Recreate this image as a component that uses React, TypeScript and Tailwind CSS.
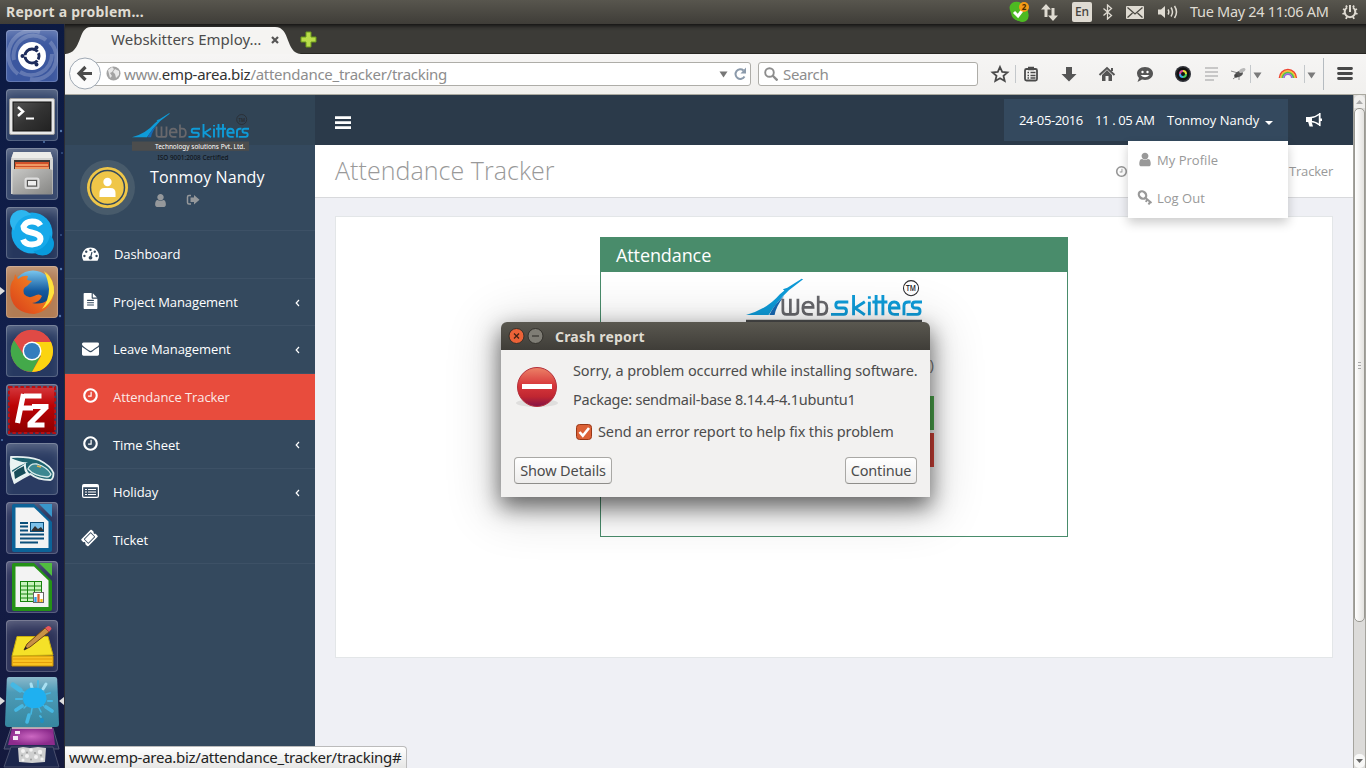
import React from "react";
import { FaTicketAlt } from "react-icons/fa";

const UI = "font-['Noto_Sans',sans-serif]";

const FA = {
  user: "M1536 1399q0 109-62.5 187t-150.5 78h-854q-88 0-150.5-78t-62.5-187q0-85 8.5-160.5t31.5-152 58.5-131 94-89 134.5-34.5q131 128 313 128t313-128q76 0 134.5 34.5t94 89 58.5 131 31.5 152 8.5 160.5zm-256-887q0 159-112.5 271.5t-271.5 112.5-271.5-112.5-112.5-271.5 112.5-271.5 271.5-112.5 271.5 112.5 112.5 271.5z",
  clock: "M1024 544v448q0 14-9 23t-23 9h-320q-14 0-23-9t-9-23v-64q0-14 9-23t23-9h224v-352q0-14 9-23t23-9h64q14 0 23 9t9 23zm416 352q0-148-73-273t-198-198-273-73-273 73-198 198-73 273 73 273 198 198 273 73 273-73 198-198 73-273zm224 0q0 209-103 385.5t-279.5 279.5-385.5 103-385.5-103-279.5-279.5-103-385.5 103-385.5 279.5-279.5 385.5-103 385.5 103 279.5 279.5 103 385.5z",
  envelope: "M1792 710v794q0 66-47 113t-113 47h-1472q-66 0-113-47t-47-113v-794q44 49 101 87 362 246 497 345 57 42 92.5 65.5t94.5 48 110 24.5h2q51 0 110-24.5t94.5-48 92.5-65.5q170-123 498-345 57-39 100-87zm0-294q0 79-49 151t-122 123q-376 261-468 325-10 7-42.5 31t-54 38.5-52 32.5-57.5 27-50 9h-2q-23 0-50-9t-57.5-27-52-32.5-54-38.5-42.5-31q-91-64-262-182.5t-205-142.5q-62-42-117-115.5t-55-136.5q0-78 41.5-130t118.5-52h1472q65 0 112.5 47t47.5 113z",
  dash: "M384 1152q0-53-37.5-90.5t-90.5-37.5-90.5 37.5-37.5 90.5 37.5 90.5 90.5 37.5 90.5-37.5 37.5-90.5zm192-448q0-53-37.5-90.5t-90.5-37.5-90.5 37.5-37.5 90.5 37.5 90.5 90.5 37.5 90.5-37.5 37.5-90.5zm428 481l101-382q6-26-7.5-48.5t-38.5-29.5-48 6.5-30 39.5l-101 382q-60 5-107 43.5t-63 98.5q-20 77 20 146t117 89 146-20 89-117q16-60-6-117t-72-91zm660-33q0-53-37.5-90.5t-90.5-37.5-90.5 37.5-37.5 90.5 37.5 90.5 90.5 37.5 90.5-37.5 37.5-90.5zm-640-640q0-53-37.5-90.5t-90.5-37.5-90.5 37.5-37.5 90.5 37.5 90.5 90.5 37.5 90.5-37.5 37.5-90.5zm448 192q0-53-37.5-90.5t-90.5-37.5-90.5 37.5-37.5 90.5 37.5 90.5 90.5 37.5 90.5-37.5 37.5-90.5zm320 448q0 261-141 483-19 29-54 29h-1402q-35 0-54-29-141-221-141-483 0-182 71-348t191-286 286-191 348-71 348 71 286 191 191 286 71 348z",
  file: "M1596 476q14 14 28 36h-472v-472q22 14 36 28zm-476 164h544v1056q0 40-28 68t-68 28h-1344q-40 0-68-28t-28-68v-1600q0-40 28-68t68-28h800v544q0 40 28 68t68 28zm160 736v-64q0-14-9-23t-23-9h-704q-14 0-23 9t-9 23v64q0 14 9 23t23 9h704q14 0 23-9t9-23zm0-256v-64q0-14-9-23t-23-9h-704q-14 0-23 9t-9 23v64q0 14 9 23t23 9h704q14 0 23-9t9-23zm0-256v-64q0-14-9-23t-23-9h-704q-14 0-23 9t-9 23v64q0 14 9 23t23 9h704q14 0 23-9t9-23z",
};

function Fa({ d, className }: { d: string; className: string }) {
  return (
    <svg viewBox="0 0 1792 1792" className={className} fill="currentColor">
      <path d={d} />
    </svg>
  );
}

function ListIcon() {
  return (
    <svg width="17" height="14" viewBox="0 0 17 14" fill="none" stroke="#fff">
      <rect x=".6" y=".6" width="15.8" height="12.8" rx="1.4" strokeWidth="1.2" />
      <path d="M1 2h15" strokeWidth="2.4" />
      <path d="M3 5.500h2M6 5.500h8M3 8h2M6 8h8M3 10.500h2M6 10.500h8" strokeWidth="1.2" />
    </svg>
  );
}

function SkitterLogo({ className, tag, cert }: { className: string; tag: string; cert: string }) {
  return (
    <svg viewBox="0 0 117 50" className={className}>
      <path d="M0 24.300Q14 20.500 22.500 10.500L25.500 8 24.500 7.300 27.500 6.300 37 .2 38 .6 28.500 7.800Q20.500 15.500 15 24.300Z" fill="#0e9bd8" />
      <path d="M15.500 24.300Q19 17 25.500 11.500 20 18.500 19 24.300Z" fill="#1769b4" />
      <g fill="none" stroke="#68686c" strokeWidth="1.800" transform="translate(0 -.5)">
        <path d="M24.500 14v8q0 2.400 2.400 2.400h5.600q2 0 2-2V14M29.500 14v10" />
        <path d="M38 19.800h6.600q0-3.600-3.200-3.600-3.600 0-3.600 4.100t3.600 4.100h3" />
        <path d="M48 12v12.400h2.400q3.400 0 3.400-4.100T50.400 16.200H48" />
      </g>
      <g fill="none" stroke="#0e9bd8" strokeWidth="1.900" transform="translate(0 -.5)">
        <path d="M68 16.200h-6.500q-1.800 0-1.800 2t1.800 2h3.500q1.800 0 1.800 2.100t-1.800 2.100h-8.500" />
        <path d="M71.500 11.500v13.500M79 16l-6.500 4.200 6.500 4.600M82 16v9M82 12.400v1.600M86.500 11.500v13.500M91 11.500v13.500M84 16.200h10" />
        <path d="M95.500 20.200h6.200q0-4-3.200-4t-3.200 4.100 3.400 4.100h3M105 25v-6.200q0-2.600 3-2.600h1.500" />
        <path d="M117 16.200h-4.500q-2 0-2 2t2 2h1.200q2 0 2 2.100t-2 2.100h-7" />
      </g>
      <circle cx="109.700" cy="6.500" r="5" fill="none" stroke="#28282c" strokeWidth=".7" />
      <text x="106.400" y="8.700" textLength="6.600" lengthAdjust="spacingAndGlyphs" fontSize="6" fontWeight="600" fill="#28282c" fontFamily="Noto Sans">TM</text>
      <rect x="0" y={tag ? 28.5 : 27.5} width="117" height="9.300" fill="#4c4d4d" />
      {tag && <text x="23" y="35.700" textLength="90" lengthAdjust="spacingAndGlyphs" fontSize="7" fill="#fff" fontFamily="Noto Sans">{tag}</text>}
      {cert && <text x="25.500" y="46.500" textLength="71" lengthAdjust="spacingAndGlyphs" fontSize="6.500" fontWeight="500" fill="#11161c" fontFamily="Noto Sans">{cert}</text>}
    </svg>
  );
}

/* ---------- launcher artwork, each drawn on a 52 by 52 tile ---------- */

function Dash() {
  return (
    <>
      <path d="M12 44A24 24 0 0 1 34 2M8 30A20 20 0 0 1 40 10M44 12A22 22 0 0 1 24 49M46 24A21 21 0 0 1 14 42" stroke="#fff" strokeOpacity=".2" strokeWidth="4" fill="none" />
      <circle cx="26" cy="26" r="14" fill="#fff" />
      <circle cx="26" cy="26" r="7" fill="none" stroke="#1d2c5c" strokeWidth="3" />
      <path d="M26 26L36 20M26 26L36 33M26 26H14" stroke="#fff" strokeWidth="1.500" />
      <circle cx="26" cy="26" r="5.300" fill="#fff" />
      <circle cx="16.500" cy="26" r="2" fill="#1d2c5c" />
      <circle cx="30.500" cy="17.500" r="2" fill="#1d2c5c" />
      <circle cx="30.500" cy="34.500" r="2" fill="#1d2c5c" />
    </>
  );
}
function Terminal() {
  return (
    <>
      <rect x="3.500" y="9.500" width="45" height="36" rx="1.500" fill="#e8e8e8" stroke="#9c9c9c" />
      <rect x="7" y="13" width="38" height="29" fill="url(#term)" stroke="#111" />
      <path d="M12 18l5 4.500-5 4.500" stroke="#fff" strokeWidth="2.500" fill="none" />
      <path d="M20 29.500h8" stroke="#fff" strokeWidth="2.200" />
    </>
  );
}
function Files() {
  return (
    <>
      <path d="M7.500 4h37l2.500 7v35H5V11z" fill="#d5d5d3" />
      <path d="M7.500 4h37l2 6H5.500z" fill="#ecece9" />
      <rect x="8" y="12" width="36" height="12" fill="#3f3936" />
      <path d="M9 14h34v8H9z" fill="#d2512a" />
      <path d="M10 17h32M9 20h34" stroke="#f7b178" strokeWidth="1.600" />
      <path d="M6.500 22l2-1h35l3 1v24.500h-40z" fill="url(#steel)" />
      <rect x="19.500" y="30.500" width="13" height="9.500" rx="1.500" fill="none" stroke="#dedede" strokeWidth="2" />
      <rect x="21.500" y="32.500" width="9" height="5.500" fill="#eee" stroke="#555" />
    </>
  );
}
function Skype() {
  return (
    <>
      <circle cx="26" cy="26" r="20.500" fill="#16a9ea" />
      <circle cx="15.500" cy="14.500" r="11.500" fill="#2db6ef" />
      <circle cx="36.500" cy="37" r="11.500" fill="#089bdd" />
      <circle cx="26" cy="26" r="18" fill="#16a9ea" />
      <path d="M34.500 18.500Q32 14.500 26 14.500t-8.500 5q0 4.500 8 6 9 1.700 9 6.500T26 37.500q-7 0-9-5" fill="none" stroke="#fff" strokeWidth="6" />
    </>
  );
}
function Firefox() {
  return (
    <>
      <circle cx="27" cy="25" r="20.500" fill="url(#globe)" />
      <path d="M40 6q8 7 8 20-2 19-20 22Q8 47 4.500 30 3 18 8 13l1-5 3 5q5-4 10-3l-1 4 5 1-5 5q-5 2-3 8 4 5 10 2 5-3 8 0-3 7-10 7 18 3 18-12-1-11-4-19z" fill="url(#fox)" />
      <path d="M38 5q11 9 10 22-4 12-12 16 7-9 7-20-1-10-5-18z" fill="#ffe23d" />
    </>
  );
}
function Chrome() {
  return (
    <>
      <circle cx="26" cy="26" r="21" fill="#e04a45" />
      <path d="M8 15A21 21 0 0 0 26 47L35 30 26 26z" fill="#43a94a" />
      <path d="M26 17h19A21 21 0 0 1 26 47l9-16z" fill="#fbd410" />
      <path d="M26 17H45A21 21 0 0 0 8 15l9 14z" fill="#e04a45" />
      <circle cx="26" cy="26" r="9.500" fill="#fff" />
      <circle cx="26" cy="26" r="8" fill="#337dbd" />
    </>
  );
}
function FileZilla() {
  return (
    <>
      <rect x="3.500" y="3.500" width="45" height="45" fill="url(#fz)" />
      <rect x="3" y="3" width="46" height="46" fill="none" stroke="#b90f12" strokeWidth="2" strokeDasharray="3.500 2.200" />
      <path d="M18 12h17.500M17.500 10l-6 29M14 24h13M26 22.500h16.500M40.500 23L23.500 40M21.500 41h17" fill="none" stroke="#fff" strokeWidth="5.200" />
    </>
  );
}
function Komodo() {
  return (
    <>
      <path d="M5 14q16-1 28 3 12 6 14.500 13 0 6-3 7-13 0-20-6-8 4-16 9-5-12-3.500-26z" fill="#1f6470" stroke="#e5efef" strokeWidth="1.800" />
      <path d="M5 15q10 5 17 4-10 4-17 9zM5 30q7-5 15-10-1 7 4 11-9 4-16 9z" fill="#e9f4f3" />
      <path d="M8 29q5-4 10-6 0 5 2 7-6 3-11 6z" fill="#174e5a" />
      <path d="M22 26q2-6 9-5 10 3 14 10-1 3-4 3-13-1-19-8z" fill="#3c8791" stroke="#d6e9e9" strokeWidth="1.300" />
      <path d="M31 23l4 1" stroke="#e7b44b" strokeWidth="1.500" />
    </>
  );
}
function Sheet({ frame, fold, children }: { frame: string; fold: string; children: React.ReactNode }) {
  return (
    <>
      <path d="M8 2h20l18 18v28q0 2-2 2H8q-2 0-2-2V4q0-2 2-2z" fill={frame} />
      <path d="M33 2h13v13z" fill={fold} />
      <path d="M9.500 5.500H28l14.500 14V46h-33z" fill="#f3f3f3" />
      {children}
    </>
  );
}
function Writer() {
  return (
    <Sheet frame="#0c6398" fold="#3996cb">
      <path d="M14 21h8M14 24.500h8M14 28.500h8M14 32.500h24M14 36.500h24M14 40.500h18" stroke="#0b4f7a" strokeWidth="2" />
      <rect x="24.500" y="20.500" width="13" height="9" fill="#7cc1ea" stroke="#0b4f7a" />
      <path d="M25 29l4-5 3 3 3-2 3 4z" fill="#333" />
    </Sheet>
  );
}
function Calc() {
  return (
    <Sheet frame="#249216" fold="#50bd3f">
      <rect x="14.500" y="20.500" width="21" height="20" fill="#c9f3bd" stroke="#16820c" />
      <path d="M14 25h22M14 29h22M14 33h22M14 37h22M21.500 20v21M28.500 20v21" stroke="#16820c" />
      <rect x="27.500" y="31.500" width="10" height="10" fill="#fff" stroke="#666" />
      <path d="M29.500 41v-5" stroke="#2e9de8" strokeWidth="2.300" />
      <path d="M32.500 41v-8" stroke="#d9622d" strokeWidth="2.300" />
      <path d="M35.500 41v-3" stroke="#f1b90d" strokeWidth="2.300" />
    </Sheet>
  );
}
function Notes() {
  return (
    <>
      <path d="M6 36h41v10H6z" fill="#fac321" stroke="#c99005" />
      <path d="M7 39h39M7 42.500h39" stroke="#e39e0b" />
      <path d="M11 16.500h31l5 18.500-41 1z" fill="#f5e128" stroke="#c9ac0d" />
      <path d="M18 30l3-6L39 8l4 4-19 15z" fill="#c89145" stroke="#6f4416" />
      <path d="M39 8l3-2q3 0 3.500 3L43 12z" fill="#e7575b" />
      <path d="M18 30l1.500-3.500 2 2z" fill="#222" />
    </>
  );
}

const apps = [
  { art: <Dash />, bg: "bg-[#3b579f]" },
  { art: <Terminal />, bg: "bg-[#2a3d64]" },
  { art: <Files />, bg: "bg-[#35466b]" },
  { art: <Skype />, bg: "bg-[#26375d]" },
  { art: <Firefox />, bg: "bg-[#b27c54]" },
  { art: <Chrome />, bg: "bg-[#273961]" },
  { art: <FileZilla />, bg: "bg-[#30385f]" },
  { art: <Komodo />, bg: "bg-[#2a3b62]" },
  { art: <Writer />, bg: "bg-[#2d365f]" },
  { art: <Calc />, bg: "bg-[#2e345e]" },
  { art: <Notes />, bg: "bg-[#2b3158]" },
];

function Launcher() {
  return (
    <aside className="relative flex w-[65px] shrink-0 flex-col items-center gap-[7px] border-r border-[#2b2d35] bg-gradient-to-b from-[#0c1a42] via-[#13204d] to-[#14193d] pt-[6px]">
      {apps.map((a, i) => (
        <div key={i} className={"h-[52px] w-[52px] shrink-0 overflow-hidden rounded-[4px] shadow-[inset_0_0_0_1px_rgba(255,255,255,0.2),inset_0_10px_14px_-6px_rgba(255,255,255,0.3)] " + a.bg}>
          <svg width="52" height="52" viewBox="0 0 52 52">{a.art}</svg>
        </div>
      ))}
      <svg width="64" height="92" viewBox="0 0 64 92" className="-mt-[3px] shrink-0">
        <path d="M9 1h46q2 0 2.200 2L59 48q0 3-3 3H8q-3 0-3-3L6.800 3Q7 1 9 1z" fill="url(#paint)" />
        <g fill="none" stroke="#45b8e4" strokeLinecap="round">
          <path d="M34 22L22 15M34 22L44 15M34 22L44 30M34 22L24 32M34 22L31 38M34 22L41 36" strokeWidth="1.500" />
          <path d="M13 9l7 5" strokeWidth="5" />
          <path d="M31 8l1 4M46 8l-3 5" strokeWidth="3" stroke="#a9e0f2" />
          <path d="M38 5v6M50 17l-4 1" strokeWidth="1.800" />
          <path d="M16 23h6M48 25l4 0" strokeWidth="2.200" />
          <path d="M16 34l6-4M46 31l6 4" strokeWidth="3.800" />
          <path d="M29 39l-2 7" strokeWidth="3.600" />
          <path d="M40 40l1 1" strokeWidth="1.800" />
          <path d="M42 44v1" strokeWidth="4" stroke="#1f8fc4" />
        </g>
        <path d="M24 17q4-6 10-5 7-1 11 5 3 6 0 10-3 5-9 5-9 1-12-5-2-5 0-10z" fill="#1fb0f0" />
        <path d="M11 52h42l6 21H4z" fill="#242b53" stroke="#555a77" />
        <path d="M12 52h41l2 17H8z" fill="url(#purple)" />
        <path d="M12 52h40" stroke="#d8d0c8" strokeWidth="1.500" />
        <path d="M15 55h5v3h-5zM13 60h5v4h-5z" fill="#f4e8f4" />
        <path d="M11 71h42l6 20H4z" fill="#1c264c" stroke="#4a506d" />
        <path d="M18 72l5-1 7 1 8-1 8 1-1 14-13 1-13-1z" fill="#cfd0d0" />
        <g fill="#f3f3f3"><circle cx="23" cy="75" r="2" /><circle cx="31" cy="74" r="1.800" /><circle cx="40" cy="76" r="2.200" /><circle cx="27" cy="80" r="2" /><circle cx="36" cy="81" r="2" /><circle cx="23" cy="84" r="1.500" /><circle cx="42" cy="83" r="1.600" /></g>
        <g fill="#9b9d9d"><circle cx="27" cy="76.500" r="1" /><circle cx="35" cy="77" r="1.100" /><circle cx="31" cy="83.500" r="1" /><circle cx="22" cy="79.500" r=".9" /><circle cx="41" cy="79.500" r=".9" /></g>
      </svg>
      <svg className="absolute left-0 top-[262px]" width="5" height="10"><path d="M0 1l5 4-5 4z" fill="#ddd" /></svg>
      <svg className="absolute left-0 top-[672px]" width="5" height="10"><path d="M0 1l5 4-5 4z" fill="#ddd" /></svg>
      <svg className="absolute right-0 top-[672px]" width="5" height="10"><path d="M5 1L0 5l5 4z" fill="#ddd" /></svg>
      <svg className="absolute left-0 top-0" width="64" height="744">
        <g fill="#5377ad"><circle cx="61" cy="107" r="1.200" /><circle cx="44" cy="118" r="1" /><circle cx="61" cy="245" r="1.200" /><circle cx="60" cy="292" r="1.200" /><circle cx="2" cy="416" r="1" /><circle cx="62" cy="129" r=".8" /><circle cx="61" cy="211" r=".8" /></g>
      </svg>
    </aside>
  );
}

function TopBar() {
  return (
    <header className={"flex h-6 shrink-0 items-center bg-gradient-to-b from-[#58564e] to-[#3f3d38] text-[#dfdbd2] " + UI}>
      <span className="-mt-px pl-[6px] text-[14px] font-bold tracking-[0.23px]">Report a problem...</span>
      <svg className="ml-auto" width="22" height="22" viewBox="0 0 22 22">
        <path d="M6 1q4-1 7 1 7 1 7 9 2 6-2 9-4 2-7 0-7-1-8-8-4-8 3-11z" fill="#4dba22" />
        <path d="M6 11l4 4 6-8" fill="none" stroke="#fff" strokeWidth="3" />
        <circle cx="16" cy="6" r="5" fill="#f59a18" />
        <text x="13.700" y="8.800" fontSize="8" fontWeight="700" fill="#4a2c00" fontFamily="Noto Sans">2</text>
      </svg>
      <svg className="ml-[11px]" width="18" height="18" viewBox="0 0 18 18">
        <path d="M5 1L0 6.500h3.500V14h3V6.500H10zM12 18l-5-5.500h3.500V5h3v7.500H17z" fill="currentColor" />
      </svg>
      <span className="ml-[13px] flex h-[20px] w-[20px] items-center justify-center rounded-[2px] bg-[#dfdbd2] text-[12px] font-medium text-[#45433e]">En</span>
      <svg className="ml-[11px]" width="10" height="16" viewBox="0 0 10 16"><path d="M.5 4.500l8 7-4 3.500V1l4 3.500-8 7" fill="none" stroke="currentColor" strokeWidth="1.300" /></svg>
      <svg className="ml-[13px]" width="18" height="13" viewBox="0 0 18 13"><rect width="18" height="13" rx="1" fill="currentColor" /><path d="M1.500 1.500L9 8l7.500-6.500M1.500 11.500L6.500 7M16.500 11.500L11.500 7" fill="none" stroke="#4b4942" strokeWidth="1.300" /></svg>
      <svg className="ml-[14px]" width="21" height="16" viewBox="0 0 21 16"><path d="M0 5.500h3L7 2v12L3 10.500H0z" fill="currentColor" /><path d="M10 5.500q1.600 2.500 0 5M13 3.500q3 4.500 0 9M16.500 2q4 6 0 12" fill="none" stroke="currentColor" strokeWidth="1.500" /></svg>
      <span className="ml-[11px] w-[139px] whitespace-nowrap text-[14.5px] tracking-[-0.3px]">Tue May 24 11:06 AM</span>
      <svg className="ml-[13px] mr-[8px]" width="16" height="16" viewBox="0 0 16 16" fill="none" stroke="currentColor">
        <path d="M5 3.500a5.300 5.300 0 1 0 6 0" strokeWidth="2" /><path d="M8 1v7" strokeWidth="2" />
        <path d="M1 5l2 1M.5 10L3 9M4 15l1-2.500M12 15l-1-2.500M15.500 10L13 9M15 5l-2 1M4 1.500l1 2M12 1.500l-1 2" strokeWidth="1.800" />
      </svg>
    </header>
  );
}

function Tabs() {
  return (
    <div className={"relative flex h-[30px] shrink-0 items-center border-b border-[#282723] bg-[#3c3b37] shadow-[inset_0_5px_4px_-3px_#111] " + UI}>
      <svg className="absolute left-0 top-[2px]" width="236" height="28" viewBox="0 0 236 28">
        <path d="M0 28C18 27 12 1 26 1H210C226 1 220 27 236 28z" fill="#f5f4f2" />
      </svg>
      <span className="relative ml-[46px] mt-[2px] w-[152px] whitespace-nowrap text-[15px] tracking-[0.02px] text-[#4c4c4c]">Webskitters Employ…</span>
      <svg className="relative mt-[2px] ml-[8px]" width="8" height="8" viewBox="0 0 8 8"><path d="M1 1l6 6M7 1L1 7" stroke="#555" strokeWidth="2.200" /></svg>
      <svg className="ml-[21px] mt-[2px]" width="17" height="17" viewBox="0 0 17 17"><path d="M6 1h5v5h5v5h-5v5H6v-5H1V6h5z" fill="#b9dc4a" stroke="#6a9a1a" /></svg>
    </div>
  );
}

const Tri = ({ className }: { className: string }) => (
  <svg className={className} width="9" height="7" viewBox="0 0 9 7"><path d="M.5.500h8L4.500 6.500z" fill="#777" /></svg>
);

function NavBar() {
  return (
    <div className={"relative flex h-[41px] shrink-0 items-center border-b border-[#aaa9a0] bg-gradient-to-b from-[#f6f5f4] to-[#f1f0ee] " + UI}>
      <div className="ml-[20px] mb-px flex h-[24px] w-[666px] items-center rounded-[3px] border border-[#aeada8] bg-white pl-[20px] text-[15px]">
        <svg width="15" height="15" viewBox="0 0 15 15"><circle cx="7.500" cy="7.500" r="7" fill="#a3a3a3" /><path d="M2 4l4-3 2 2-2 3-2 1 2 3-2 2zM9 3l4 2v4l-3 3-1-4-2-2z" fill="#e8e8e8" /></svg>
        <span className="ml-[3px] mt-px whitespace-nowrap tracking-[-0.27px] text-[#8d8d8d]">www.<span className="text-[#333]">emp-area.biz</span>/attendance_tracker/tracking</span>
        <Tri className="ml-auto mt-[2px]" />
        <svg className="ml-[5px] mr-[3px]" width="14" height="14" viewBox="0 0 14 14"><path d="M11.500 9.500A4.800 4.800 0 1 1 10.500 3.500" fill="none" stroke="#8b9aab" strokeWidth="2" /><path d="M13 .5v6H7.500z" fill="#8b9aab" /></svg>
      </div>
      <svg className="absolute left-[3px] top-[3px]" width="34" height="34" viewBox="0 0 34 34">
        <circle cx="17" cy="16.500" r="15.500" fill="#fbfbfb" stroke="#9fa9b4" />
        <path d="M17.500 10l-6.500 6.500 6.500 6.500M11.500 16.500H24" fill="none" stroke="#4c4c4c" strokeWidth="3.200" />
      </svg>
      <div className="ml-[7px] mb-px flex h-[24px] w-[220px] items-center rounded-[3px] border border-[#aeada8] bg-white pl-[5px] text-[15px] text-[#8d8d8d]">
        <svg width="14" height="14" viewBox="0 0 14 14" fill="none" stroke="#8d8d8d"><circle cx="5.500" cy="5.500" r="4.300" strokeWidth="1.900" /><path d="M8.500 8.500l5 5" strokeWidth="2.400" /></svg>
        <span className="ml-[5px] mt-px tracking-[-0.35px]">Search</span>
      </div>
      <svg className="mb-px" width="375" height="38" viewBox="978 55 375 38">
        <path d="M1000 67l2.200 4.800 5.300.6-4 3.500 1.200 5.100-4.700-2.800-4.700 2.800 1.200-5.100-4-3.500 5.300-.6z" fill="none" stroke="#4a4a4a" strokeWidth="1.800" />
        <path d="M1015.500 65v18M1250.500 65v18M1304.500 65v18" stroke="#c4c8cb" />
        <path d="M1323.500 58v32" stroke="#b5bbc0" />
        <g fill="none" stroke="#4a4a4a"><rect x="1025" y="69" width="12" height="11.500" rx="1.500" strokeWidth="1.800" /><path d="M1028 68.500h6" strokeWidth="3.500" /><path d="M1027.500 72.500h1.500M1030.500 72.500h5M1027.500 75.500h1.500M1030.500 75.500h5M1027.500 78h1.500M1030.500 78h5" strokeWidth="1.300" /></g>
        <path d="M1066 67h6v7h4.500l-7.500 7.500-7.500-7.500h4.500z" fill="#555" />
        <path d="M1099.500 75l7.500-7 7.500 7" fill="none" stroke="#555" strokeWidth="2" /><path d="M1102 75l5-5 5 5v6h-3.500v-5h-3v5h-3.500z" fill="#555" /><path d="M1111 68h2v3h-2z" fill="#555" />
        <path d="M1145 67c5 0 8 3 8 6.500s-3 6.500-8 6.500q-1.500 0-3-.4L1137.500 82l1.500-4q-2-2-2-4.500c0-3.500 3-6.500 8-6.500z" fill="#555" />
        <circle cx="1142.500" cy="72" r="1.200" fill="#fff" /><circle cx="1147.500" cy="72" r="1.200" fill="#fff" /><path d="M1140.500 75h9q-4.500 4.500-9 0z" fill="#fff" />
        <circle cx="1183" cy="74" r="8" fill="#303239" /><circle cx="1183" cy="74" r="6.500" fill="#111" />
        <g fill="none" strokeWidth="2"><path d="M1180 74a3 3 0 0 1 3-3" stroke="#d84a96" /><path d="M1183 71a3 3 0 0 1 3 3" stroke="#e6df3a" /><path d="M1186 74a3 3 0 0 1-3 3" stroke="#49cc5c" /><path d="M1183 77a3 3 0 0 1-3-3" stroke="#3fa8e8" /></g>
        <path d="M1205 68h13M1205 72h13M1205 76h13M1205 80h9" stroke="#b9b9b9" strokeWidth="1.600" />
        <path d="M1231 71l7 2M1233 79l5-4M1239 80v-5M1234 75h4" stroke="#888" /><ellipse cx="1239" cy="74" rx="4" ry="2.700" fill="#555" transform="rotate(-25 1239 74)" /><ellipse cx="1242" cy="70.500" rx="3.500" ry="1.800" fill="#b8b8b8" transform="rotate(-30 1242 70)" /><circle cx="1236" cy="76" r="1.800" fill="#444" />
        <path d="M1253.500 72.500h8l-4 6zM1307.500 72.500h8l-4 6z" fill="#7b7b7b" />
        <g fill="none" strokeWidth="1.700"><path d="M1279.500 78a8.400 8.400 0 0 1 16.800 0" stroke="#ee4431" /><path d="M1281 78a6.900 6.900 0 0 1 13.800 0" stroke="#f6c235" /><path d="M1282.500 78a5.400 5.400 0 0 1 10.800 0" stroke="#53c34c" /><path d="M1284 78a3.900 3.900 0 0 1 7.800 0" stroke="#9b67de" /></g>
        <path d="M1338.500 68.500h13M1338.500 73.500h13M1338.500 78.500h13" stroke="#484848" strokeWidth="2.800" strokeLinecap="round" />
      </svg>
    </div>
  );
}

const nav: { label: string; h: string; pad: string; icon: React.ReactNode; arrow?: boolean; active?: boolean }[] = [
  { label: "Dashboard", h: "h-[48px]", pad: "pl-px", icon: <Fa d={FA.dash} className="h-[17px] w-[17px]" /> },
  { label: "Project Management", h: "h-[47px]", pad: "pt-[2px]", icon: <Fa d={FA.file} className="h-[16px] w-[17px]" />, arrow: true },
  { label: "Leave Management", h: "h-[48px]", pad: "", icon: <Fa d={FA.envelope} className="h-[17px] w-[17px]" />, arrow: true },
  { label: "Attendance Tracker", h: "h-[47px]", pad: "pt-[2px]", icon: <Fa d={FA.clock} className="h-[17px] w-[17px]" />, active: true },
  { label: "Time Sheet", h: "h-[48px]", pad: "pt-[2px]", icon: <Fa d={FA.clock} className="h-[17px] w-[17px]" />, arrow: true },
  { label: "Holiday", h: "h-[47px]", pad: "pt-[2px]", icon: <ListIcon />, arrow: true },
  { label: "Ticket", h: "h-[48px]", pad: "pt-[2px]", icon: <FaTicketAlt className="h-[14px] w-[15px] -rotate-45" /> },
];

function Sidebar() {
  return (
    <aside className="relative flex w-[250px] shrink-0 flex-col bg-[#34495e] text-white">
      <div className="h-[50px] shrink-0 bg-[#314455]" />
      <SkitterLogo className="absolute left-[67px] top-[18px] h-[50px] w-[117px]" tag="Technology solutions Pvt. Ltd." cert="ISO 9001:2008 Certified" />
      <div className="flex h-[86px] shrink-0 border-b border-[#3d5166] pl-[15px] pt-[15px]">
        <svg width="55" height="55" viewBox="0 0 55 55">
          <circle cx="27.500" cy="27.500" r="27.500" fill="#485b6b" />
          <circle cx="27.500" cy="27.500" r="20.500" fill="#efc648" />
          <circle cx="27.500" cy="27.500" r="17" fill="#efc648" stroke="#34495e" strokeWidth="1.500" />
          <circle cx="27.500" cy="22" r="4.200" fill="#fff" />
          <path d="M19.500 37v-4q0-5 5-5h6q5 0 5 5v4z" fill="#fff" />
        </svg>
        <div className="ml-[15px] flex flex-col pt-[5px]">
          <span className="text-[16px] leading-[24px] tracking-[0.1px]">Tonmoy Nandy</span>
          <div className="mt-[4px] flex gap-[18px] pl-[3px] text-[#95989b]">
            <Fa d={FA.user} className="h-[15px] w-[15px]" />
            <svg width="14" height="14" viewBox="0 0 14 14"><path d="M5 2.500H3Q1.500 2.500 1.500 4v5.500Q1.500 11 3 11h2" fill="none" stroke="currentColor" strokeWidth="1.500" /><path d="M8 2l5.500 4.800L8 11.500V9H4.500V4.500H8z" fill="currentColor" /></svg>
          </div>
        </div>
      </div>
      {nav.map((n) => (
        <div key={n.label} className={"flex shrink-0 items-center border-b pl-[17px] pr-[15px] text-[13px] " + n.h + (n.active ? " border-[#34495e] bg-[#e84c3d] bg-clip-padding text-[#fbe9e7]" : " border-[#3d5166]")}>
          <span className="mb-[3px] flex w-[31px] items-center text-white">{n.icon}</span>
          <span className={"tracking-[-0.08px] " + n.pad}>{n.label}</span>
          {n.arrow && <svg className="ml-auto mt-px" width="5" height="8" viewBox="0 0 5 8"><path d="M4 1L1.200 4 4 7" fill="none" stroke="#fff" strokeWidth="1.200" /></svg>}
        </div>
      ))}
    </aside>
  );
}

function Main() {
  return (
    <main className="relative flex w-[1038px] shrink-0 flex-col bg-[#eff0f5]">
      <div className="flex h-[50px] shrink-0 items-center bg-[#2b3a4a] text-white">
        <svg className="ml-[20px] mt-[5px]" width="16" height="14" viewBox="0 0 16 14"><path d="M0 1.600h16M0 6.600h16M0 11.600h16" stroke="#fff" strokeWidth="2.700" /></svg>
        <div className="ml-auto flex h-[42px] w-[284px] items-center whitespace-nowrap bg-[#34495e] px-[15px] pt-[2px] text-[13px]">
          <span className="w-[76px] tracking-[-0.4px]">24-05-2016</span>
          <span className="w-[72px] tracking-[-0.35px]">11 . 05 AM</span>
          <span>Tonmoy Nandy</span>
          <svg className="ml-auto mt-[3px]" width="8" height="4"><path d="M0 0h8L4 4z" fill="#fff" /></svg>
        </div>
        <svg className="ml-[18px] mr-[31px]" width="16" height="15" viewBox="0 0 16 15"><path d="M13.500 1v11Q9 8.500 5 8.500v-4Q9 4.500 13.500 1z" fill="none" stroke="#fff" strokeWidth="1.400" /><path d="M0 4h6v5H0zM2 8.500h3.500l1.500 5H3.500zM14 5.500h2v2.500h-2zM13 0h1.500v13H13z" fill="#fff" /></svg>
      </div>
      <div className="flex h-[53px] shrink-0 items-center border-b border-[#d8d9dc] bg-white px-[20px] text-[#999]">
        <h1 className="text-[25px] font-light tracking-[0.05px]">Attendance Tracker</h1>
        <Fa d={FA.clock} className="ml-auto h-[13px] w-[13px]" />
        <span className="ml-[161px] pt-px text-[13px] tracking-[-0.2px]">Tracker</span>
      </div>
      <section className="ml-[20px] mt-[18px] h-[442px] w-[998px] border border-[#e3e6e8] bg-white">
        <div className="ml-[264px] mt-[20px] flex h-[300px] w-[468px] flex-col border border-[#498c6b]">
          <h2 className="flex h-[34px] shrink-0 items-center bg-[#498c6b] pl-[15px] pt-px text-[18px] tracking-[-0.1px] text-white">Attendance</h2>
          <div className="flex flex-col items-center">
            <SkitterLogo className="mt-[6px] h-[76px] w-[176px]" tag="" cert="" />
            <div className="flex h-[20px] w-[200px] items-center justify-end text-[15px] text-[#777]">)</div>
            <div className="mt-[22px] h-[34px] w-[200px] bg-[#4fae4f]" />
            <div className="mt-[3px] h-[34px] w-[200px] bg-[#d9443a]" />
          </div>
        </div>
      </section>
      <div className="absolute left-[813px] top-[46px] flex h-[77px] w-[160px] flex-col bg-white text-[13px] text-[#999] shadow-[0_5px_10px_rgba(0,0,0,0.2)]">
        <div className="flex h-[38px] items-center gap-[4px] pl-[9px] pt-[2px]"><Fa d={FA.user} className="mb-[4px] h-[17px] w-[16px]" /><span className="tracking-[0.03px]">My Profile</span></div>
        <div className="flex h-[38px] items-center gap-[4px] pl-[9px] pt-[2px]">
          <svg className="mb-[2px]" width="16" height="16" viewBox="0 0 16 16" fill="none" stroke="currentColor"><ellipse cx="5.500" cy="5" rx="3.300" ry="4" transform="rotate(-45 5.500 5)" strokeWidth="2.300" /><path d="M8 7.500l6.500 5.500M10 9.500l-1 2.500M13 12l-1.500 2.500" strokeWidth="2" /></svg>
          <span>Log Out</span>
        </div>
      </div>
    </main>
  );
}

function ScrollBar() {
  return (
    <div className="flex w-[13px] shrink-0 flex-col border-x border-[#a5a49e] bg-[#dcdbd9]">
      <div className="flex h-[13px] items-center justify-center rounded-t-[6px] bg-[#efeeec]"><svg width="7" height="4"><path d="M0 4h7L3.500 0z" fill="#aaa" /></svg></div>
      <div className="flex h-[514px] flex-col items-center justify-center gap-[2px] rounded-[5px] border border-[#999892] bg-gradient-to-r from-white to-[#e3e2df]">
        <i className="h-px w-[3px] bg-[#aaa]" /><i className="h-px w-[3px] bg-[#aaa]" /><i className="h-px w-[3px] bg-[#aaa]" />
      </div>
      <div className="mt-auto flex h-[14px] items-center justify-center rounded-[5px] bg-[#f8f8f7]"><svg width="7" height="4"><path d="M0 0h7L3.500 4z" fill="#666" /></svg></div>
    </div>
  );
}

function CrashDialog() {
  const btn = "flex h-[27px] items-center justify-center whitespace-nowrap rounded-[4px] border border-[#a9a8a5] border-b-[#8e8d8a] bg-gradient-to-b from-white to-[#eeedec]";
  return (
    <div className={"absolute left-[501px] top-[322px] flex h-[175px] w-[429px] flex-col rounded-t-[6px] bg-[#f2f1f0] text-[14.5px] text-[#4c4c4c] shadow-[0_9px_22px_1px_rgba(0,0,0,0.55),0_8px_50px_8px_rgba(0,0,0,0.16)] " + UI}>
      <div className="flex h-[28px] shrink-0 items-center rounded-t-[6px] bg-gradient-to-b from-[#5a5850] to-[#3f3d38] pl-[7px] text-[14px] font-bold text-[#dfdbd2]">
        <svg width="36" height="18" viewBox="0 0 36 18">
          <circle cx="8.500" cy="9" r="7.500" fill="#ec6237" stroke="#33312c" /><path d="M6 6.500l5 5M11 6.500l-5 5" stroke="#422214" strokeWidth="1.300" />
          <circle cx="27.500" cy="9" r="7.500" fill="#7f7d75" stroke="#33312c" /><path d="M24 9h7" stroke="#3c3a35" strokeWidth="1.300" />
        </svg>
        <span className="ml-[11px] tracking-[0.2px]">Crash report</span>
      </div>
      <div className="flex h-[98px] shrink-0">
        <svg className="ml-[14px] mt-[15px]" width="44" height="44" viewBox="0 0 44 44">
          <ellipse cx="22" cy="38" rx="21" ry="4" fill="#000" opacity=".08" />
          <circle cx="22" cy="22" r="19.500" fill="url(#stop)" stroke="#b4303b" />
          <path d="M7 21.500h30" stroke="#fff" strokeWidth="5" />
        </svg>
        <div className="ml-[14px] flex flex-col whitespace-nowrap">
          <span className="mt-[9px] h-[22px] leading-[22px] tracking-[-0.1px]">Sorry, a problem occurred while installing software.</span>
          <span className="mt-[7px] h-[22px] leading-[22px] tracking-[-0.23px]">Package: sendmail-base 8.14.4-4.1ubuntu1</span>
          <div className="mt-[11px] flex h-[22px] items-center pl-[3px]">
            <svg width="16" height="16" viewBox="0 0 16 16"><rect x=".5" y=".5" width="15" height="15" rx="3" fill="#dc6136" stroke="#983716" /><path d="M3.500 8l3.300 3.700L13 4" fill="none" stroke="#fff" strokeWidth="2.600" /></svg>
            <span className="ml-[6px] tracking-[-0.13px]">Send an error report to help fix this problem</span>
          </div>
        </div>
      </div>
      <div className="mt-[9px] flex justify-between px-[13px]">
        <div className={btn + " w-[98px] tracking-[-0.12px]"}>Show Details</div>
        <div className={btn + " w-[72px] tracking-[-0.2px]"}>Continue</div>
      </div>
    </div>
  );
}

export default function App() {
  return (
    <div className="relative flex h-[768px] w-[1366px] flex-col overflow-hidden bg-white font-['Open_Sans',sans-serif]">
      <svg width="0" height="0" className="absolute">
        <defs>
          <linearGradient id="term" x1="0" y1="0" x2="1" y2="1"><stop stopColor="#555" /><stop offset=".5" stopColor="#333" /><stop offset="1" stopColor="#222" /></linearGradient>
          <linearGradient id="steel" x1="0" y1="0" x2="1" y2="1"><stop stopColor="#c8c8c6" /><stop offset="1" stopColor="#858583" /></linearGradient>
          <linearGradient id="globe" x1="0" y1="0" x2="0" y2="1"><stop stopColor="#7ac6ee" /><stop offset=".5" stopColor="#135a9f" /><stop offset="1" stopColor="#0c376e" /></linearGradient>
          <linearGradient id="fox" x1="0" y1="1" x2="1" y2="0"><stop stopColor="#d83c19" /><stop offset=".6" stopColor="#ee7520" /><stop offset="1" stopColor="#ffd231" /></linearGradient>
          <linearGradient id="fz" x1="0" y1="0" x2="0" y2="1"><stop stopColor="#d4363b" /><stop offset=".4" stopColor="#bd0305" /><stop offset="1" stopColor="#8c0000" /></linearGradient>
          <linearGradient id="paint" x1="0" y1="0" x2="0" y2="1"><stop stopColor="#8cb9cb" /><stop offset=".3" stopColor="#4d9bb7" /><stop offset="1" stopColor="#37879f" /></linearGradient>
          <radialGradient id="purple"><stop stopColor="#cc68c2" /><stop offset="1" stopColor="#8c2b8c" /></radialGradient>
          <linearGradient id="stop" x1="0" y1="0" x2="0" y2="1"><stop stopColor="#ec8267" /><stop offset=".45" stopColor="#d7373b" /><stop offset=".75" stopColor="#c02631" /><stop offset="1" stopColor="#831246" /></linearGradient>
        </defs>
      </svg>
      <TopBar />
      <div className="flex h-[744px]">
        <Launcher />
        <div className="relative flex w-[1301px] flex-col">
          <Tabs />
          <NavBar />
          <div className="flex h-[673px]">
            <Sidebar />
            <Main />
            <ScrollBar />
          </div>
          <div className={"absolute bottom-0 left-0 flex h-[22px] w-[342px] items-center whitespace-nowrap rounded-tr-[4px] border-r border-t border-[#bbb] bg-gradient-to-b from-white to-[#e6e6e5] pl-[4px] text-[15px] tracking-[-0.27px] text-[#222] " + UI}>
            www.emp-area.biz/attendance_tracker/tracking#
          </div>
        </div>
      </div>
      <CrashDialog />
    </div>
  );
}
